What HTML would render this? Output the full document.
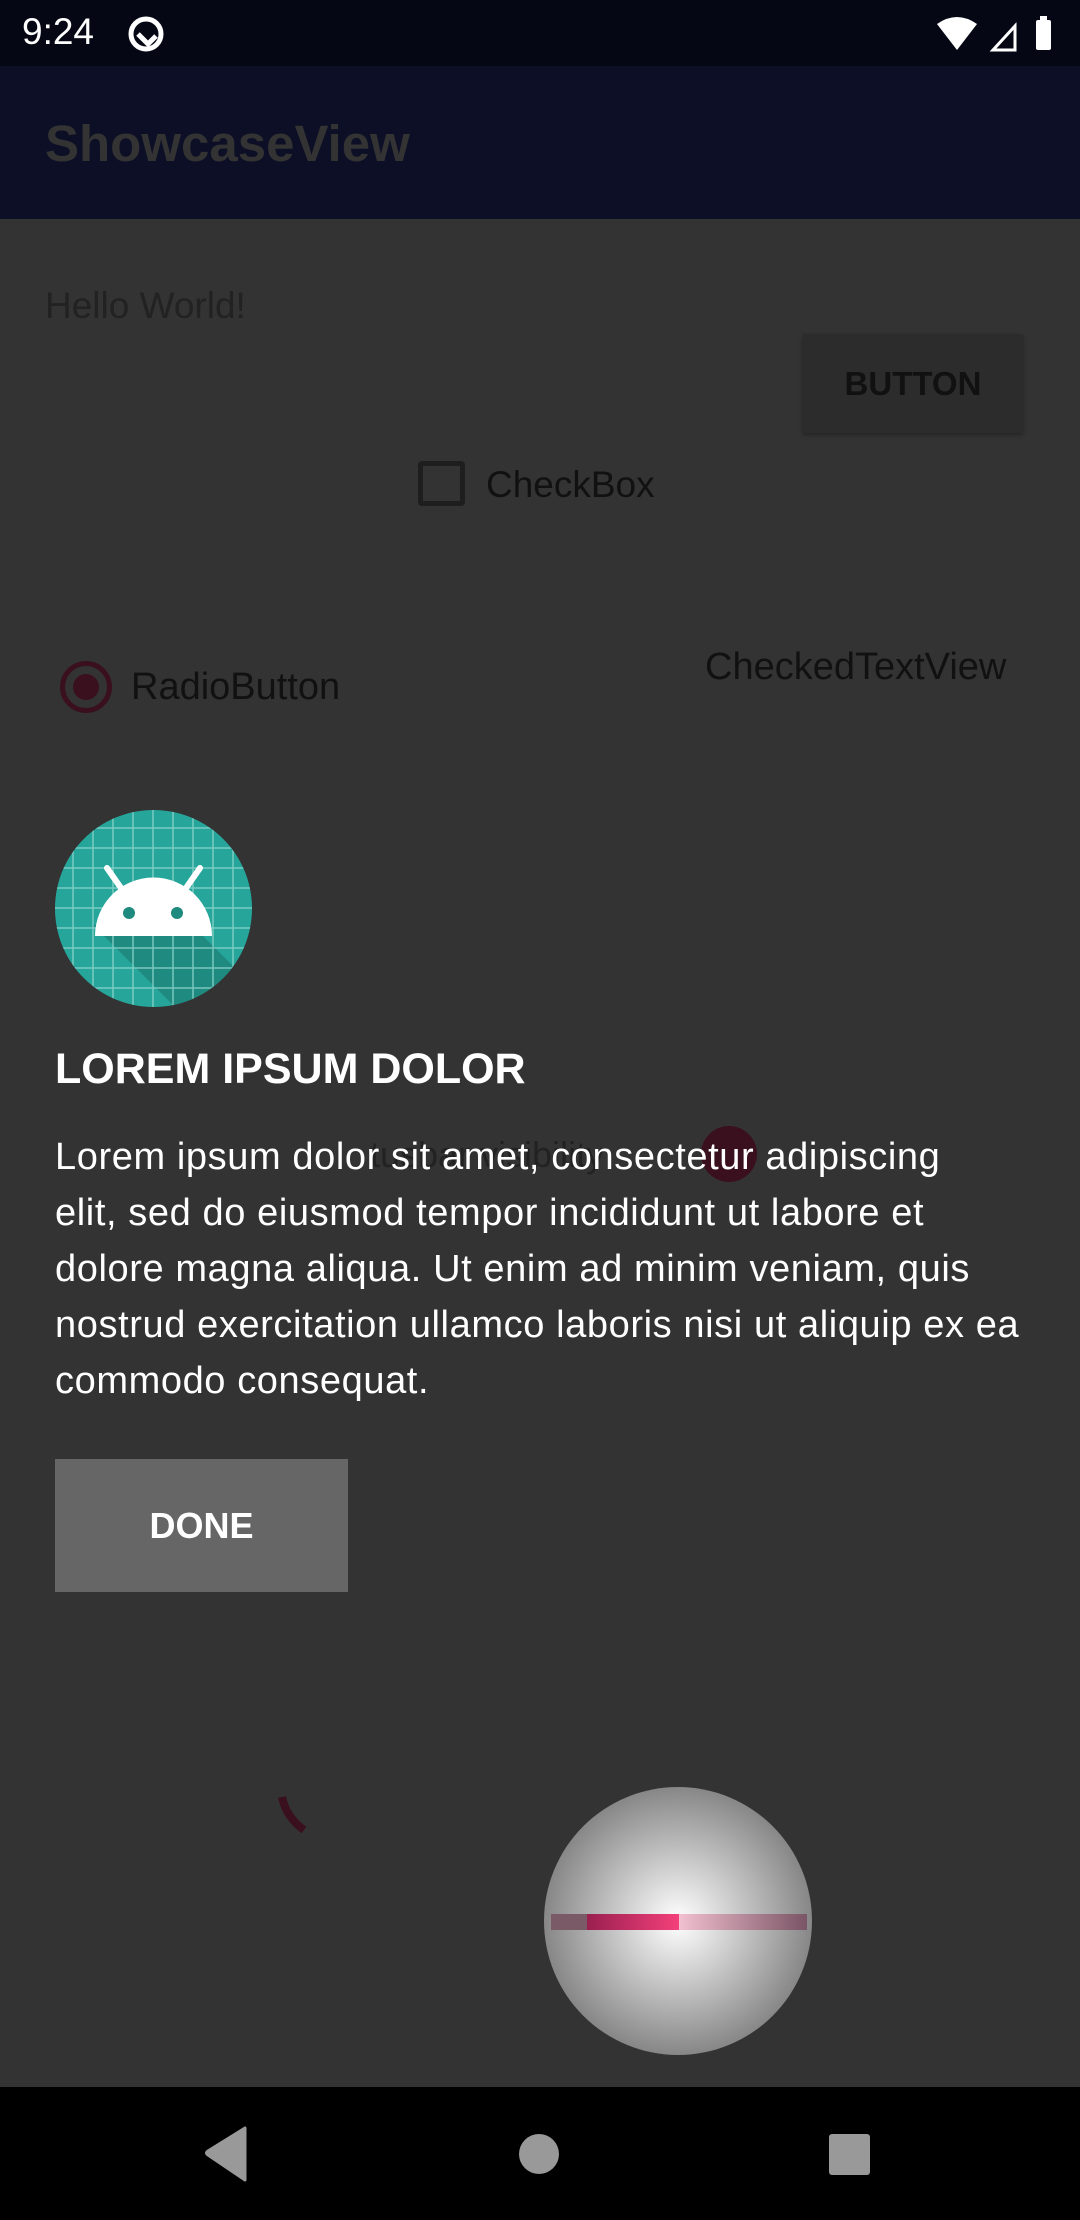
<!DOCTYPE html>
<html><head><meta charset="utf-8"><style>
*{margin:0;padding:0;box-sizing:border-box}
body{width:1080px;height:2220px;background:#333;font-family:"Liberation Sans",sans-serif;position:relative;overflow:hidden}
.a{position:absolute;white-space:nowrap}
</style></head><body>
<div class="a" style="left:0;top:0;width:1080px;height:66px;background:#050814"></div>
<div class="a" style="left:22px;top:11px;font-size:37px;color:#fff">9:24</div>
<svg class="a" style="left:126px;top:14px" width="40" height="40" viewBox="0 0 40 40"><circle cx="20" cy="20" r="15" fill="none" stroke="#fff" stroke-width="5"/><path d="M12 20 L22 30 L30 22" fill="none" stroke="#fff" stroke-width="5"/></svg>
<svg class="a" style="left:935px;top:14px" width="130" height="40" viewBox="0 0 130 40"><path d="M2 10 Q22 -4 42 10 L22 36 Z" fill="#fff"/><path d="M58 36 L80 12 L80 36 Z" fill="none" stroke="#fff" stroke-width="3"/><rect x="101" y="6" width="15" height="30" rx="2" fill="#fff"/><rect x="105" y="2" width="7" height="5" fill="#fff"/></svg>
<div class="a" style="left:0;top:66px;width:1080px;height:153px;background:#0c0f26"></div>
<div class="a" style="left:45px;top:114px;font-size:51px;font-weight:bold;color:#333">ShowcaseView</div>
<div class="a" style="left:45px;top:285px;font-size:37px;color:#222">Hello World!</div>
<div class="a" style="left:803px;top:334px;width:220px;height:99px;background:#2c2c2c;box-shadow:0 2px 4px rgba(0,0,0,.3);font-size:33px;font-weight:bold;color:#111;text-align:center;line-height:99px">BUTTON</div>
<div class="a" style="left:418px;top:461px;width:47px;height:45px;border:5px solid #1e1e1e;border-radius:4px"></div>
<div class="a" style="left:486px;top:464px;font-size:37px;color:#111">CheckBox</div>
<div class="a" style="left:60px;top:661px;width:52px;height:52px;border:5px solid #3a0f1e;border-radius:50%"></div>
<div class="a" style="left:73px;top:674px;width:26px;height:26px;background:#3a0f1e;border-radius:50%"></div>
<div class="a" style="left:131px;top:666px;font-size:38px;color:#111">RadioButton</div>
<div class="a" style="left:705px;top:646px;font-size:38px;color:#111">CheckedTextView</div>
<svg class="a" style="left:55px;top:810px" width="197" height="197" viewBox="0 0 197 197">
<defs><clipPath id="c"><circle cx="98.5" cy="98.5" r="98.5"/></clipPath></defs>
<g clip-path="url(#c)"><rect width="197" height="197" fill="#26a69a"/>
<path d="M38 115 L137 115 L197 175 L197 197 L120 197 Z" fill="#1e8a80"/>
<g stroke="#8fd5ce" stroke-width="1.5" opacity=".8">
<path d="M18 0V197M38 0V197M58 0V197M78 0V197M98 0V197M118 0V197M138 0V197M158 0V197M178 0V197M0 18H197M0 38H197M0 58H197M0 78H197M0 98H197M0 118H197M0 138H197M0 158H197M0 178H197"/></g>
<path d="M40 126 A58 58 0 0 1 157 126 Z" fill="#fff"/>
<path d="M52 58 L66 78 M145 58 L131 78" stroke="#fff" stroke-width="6" stroke-linecap="round"/>
<circle cx="74" cy="103" r="6" fill="#1e8a80"/><circle cx="122" cy="103" r="6" fill="#1e8a80"/></g></svg>
<div class="a" style="left:55px;top:1045px;font-size:43px;font-weight:bold;color:#fff">LOREM IPSUM DOLOR</div>
<div class="a" style="left:370px;top:1134px;font-size:36px;color:#222">tusbar visibility</div>
<div class="a" style="left:701px;top:1126px;width:56px;height:56px;border-radius:50%;background:#3a0f1e"></div>
<div class="a" style="left:55px;top:1129px;font-size:38px;line-height:56px;color:#fff;letter-spacing:0.6px">Lorem ipsum dolor sit amet, consectetur adipiscing<br>elit, sed do eiusmod tempor incididunt ut labore et<br>dolore magna aliqua. Ut enim ad minim veniam, quis<br>nostrud exercitation ullamco laboris nisi ut aliquip ex ea<br>commodo consequat.</div>
<div class="a" style="left:55px;top:1459px;width:293px;height:133px;background:#666;color:#fff;font-size:36px;font-weight:bold;text-align:center;line-height:133px">DONE</div>
<svg class="a" style="left:270px;top:1785px" width="60" height="60"><path d="M12 12 Q16 32 34 45" fill="none" stroke="#3a0f1e" stroke-width="8"/></svg>
<div class="a" style="left:544px;top:1787px;width:268px;height:268px;border-radius:50%;background:radial-gradient(circle,#fff 0%,#ccc 30%,#888 70%,#555 100%)"></div>
<div class="a" style="left:551px;top:1914px;width:256px;height:16px;background:linear-gradient(90deg,#7a5a66 0%,#7a5a66 14%,transparent 14%,transparent 50%,#f2c0d0 50%,#7a5565 100%)"></div>
<div class="a" style="left:587px;top:1914px;width:92px;height:16px;background:linear-gradient(90deg,#9a2050,#f3407a)"></div>
<div class="a" style="left:0;top:2087px;width:1080px;height:133px;background:#000"></div>
<svg class="a" style="left:200px;top:2122px" width="680" height="64" viewBox="0 0 680 64"><path d="M45 6 L45 58 L8 33 Q5 31 8 29 Z" fill="#999" stroke="#999" stroke-width="3" stroke-linejoin="round"/><circle cx="339" cy="32" r="20" fill="#999"/><rect x="629" y="12" width="41" height="41" rx="3" fill="#999"/></svg>
</body></html>
